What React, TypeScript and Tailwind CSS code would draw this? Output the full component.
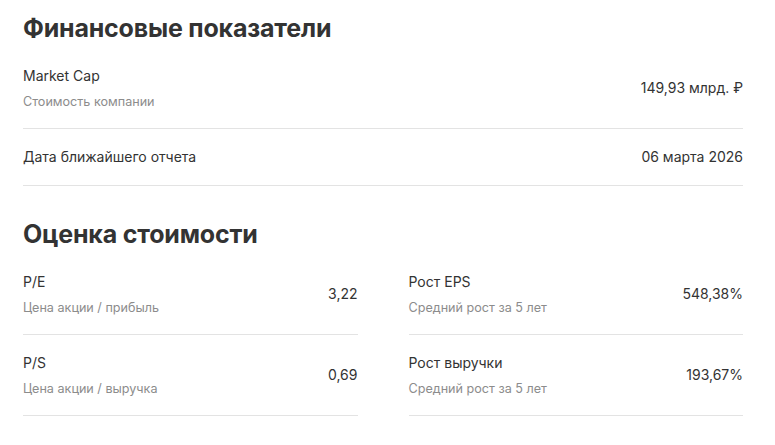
const font = { fontFamily: "Inter, 'Noto Sans', sans-serif" }

type Item = { label: string; hint?: string; value: string }

const finance: Item[] = [
  { label: "Market Cap", hint: "Стоимость компании", value: "149,93 млрд. ₽" },
  { label: "Дата ближайшего отчета", value: "06 марта 2026" },
]

const left: Item[] = [
  { label: "P/E", hint: "Цена акции / прибыль", value: "3,22" },
  { label: "P/S", hint: "Цена акции / выручка", value: "0,69" },
]

const right: Item[] = [
  { label: "Рост EPS", hint: "Средний рост за 5 лет", value: "548,38%" },
  { label: "Рост выручки", hint: "Средний рост за 5 лет", value: "193,67%" },
]

function Row({ item }: { item: Item }) {
  return (
    <div className="flex items-center justify-between border-b border-[#e3e3e3] py-[18px]">
      <div className="flex flex-col gap-[8px]">
        <span className="text-[14px] leading-[20px] text-[#333]">{item.label}</span>
        {item.hint && (
          <span className="text-[12.6px] leading-[16px] text-[#8c8c8c]">{item.hint}</span>
        )}
      </div>
      <span className="text-[14px] leading-[20px] text-[#333]">{item.value}</span>
    </div>
  )
}

export default function App() {
  return (
    <div style={font} className="w-[775px] h-[445px] overflow-hidden bg-white px-[23px] pt-[12px]">
      <div className="w-[720px]">
        <h2 className="text-[25px] leading-[32px] font-bold text-[#333] tracking-[-0.2px]">
          Финансовые показатели
        </h2>
        <div className="mt-[4px]">
          {finance.map((f) => (
            <Row key={f.label} item={f} />
          ))}
        </div>

        <h2 className="mt-[32px] text-[25px] leading-[32px] font-bold text-[#333] tracking-[-0.2px]">
          Оценка стоимости
        </h2>
        <div className="mt-[4px] grid grid-cols-2 gap-x-[51px]">
          <div>
            {left.map((f) => (
              <Row key={f.label} item={f} />
            ))}
          </div>
          <div>
            {right.map((f) => (
              <Row key={f.label} item={f} />
            ))}
          </div>
        </div>
      </div>
    </div>
  )
}
